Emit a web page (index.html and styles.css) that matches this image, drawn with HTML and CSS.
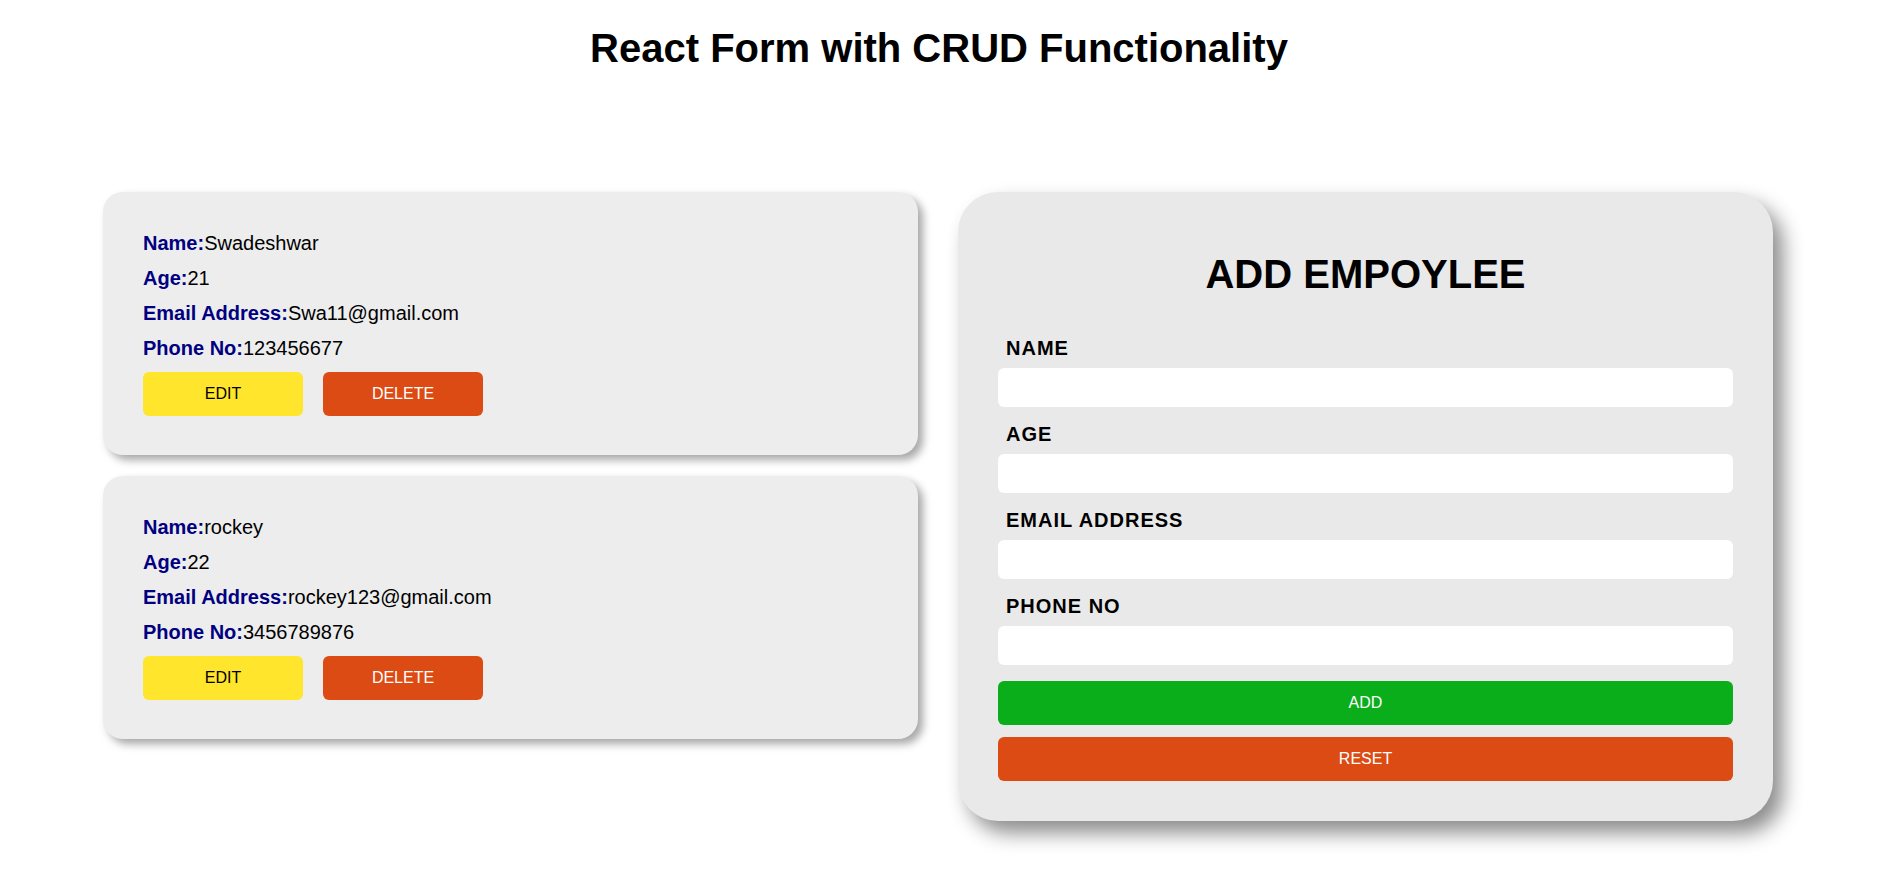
FILE: index.html
```html
<!DOCTYPE html>
<html lang="en">
<head>
<meta charset="utf-8">
<title>React Form with CRUD Functionality</title>
<link rel="stylesheet" href="styles.css">
</head>
<body>
<h1 class="page-title">React Form with CRUD Functionality</h1>
<main class="layout">
  <section class="list">
    <div class="emp-card">
      <p class="row"><span class="key">Name:</span>Swadeshwar</p>
      <p class="row"><span class="key">Age:</span>21</p>
      <p class="row"><span class="key">Email Address:</span>Swa11@gmail.com</p>
      <p class="row"><span class="key">Phone No:</span>123456677</p>
      <div class="actions">
        <button class="btn btn-edit">EDIT</button>
        <button class="btn btn-delete">DELETE</button>
      </div>
    </div>
    <div class="emp-card">
      <p class="row"><span class="key">Name:</span>rockey</p>
      <p class="row"><span class="key">Age:</span>22</p>
      <p class="row"><span class="key">Email Address:</span>rockey123@gmail.com</p>
      <p class="row"><span class="key">Phone No:</span>3456789876</p>
      <div class="actions">
        <button class="btn btn-edit">EDIT</button>
        <button class="btn btn-delete">DELETE</button>
      </div>
    </div>
  </section>
  <form class="form-card">
    <h2 class="form-title">ADD EMPOYLEE</h2>
    <label class="field-label">NAME</label>
    <input class="field-input" type="text">
    <label class="field-label">AGE</label>
    <input class="field-input" type="text">
    <label class="field-label">EMAIL ADDRESS</label>
    <input class="field-input" type="text">
    <label class="field-label">PHONE NO</label>
    <input class="field-input" type="text">
    <button type="button" class="wide-btn btn-add">ADD</button>
    <button type="button" class="wide-btn btn-reset">RESET</button>
  </form>
</main>
</body>
</html>
```

FILE: styles.css
```css
* { box-sizing: border-box; }

html, body {
  min-height: 100%;
}

body {
  margin: 0;
  padding-bottom: 60px;
  background: #ffffff;
  font-family: "Liberation Sans", Arial, sans-serif;
  color: #000;
}

.page-title {
  margin: 0;
  padding-top: 25px;
  padding-right: 4px;
  font-size: 40px;
  line-height: 46px;
  font-weight: bold;
  text-align: center;
}

.layout {
  display: flex;
  align-items: flex-start;
  gap: 40px;
  margin-top: 121px;
  padding-left: 103px;
}

.list {
  width: 815px;
  display: flex;
  flex-direction: column;
  gap: 21px;
}

.emp-card {
  background: #ededed;
  border-radius: 20px;
  padding: 34px 40px 39px;
  box-shadow: 5px 5px 9px rgba(0, 0, 0, 0.35);
}

.row {
  margin: 0;
  font-size: 20px;
  line-height: 35px;
  color: #000;
}

.key {
  color: #000080;
  font-weight: bold;
}

.actions {
  display: flex;
  gap: 20px;
  margin-top: 6px;
}

.btn {
  width: 160px;
  height: 44px;
  border: none;
  border-radius: 6px;
  font-family: "Liberation Sans", Arial, sans-serif;
  font-size: 16px;
  padding: 0;
}

.btn-edit { background: #ffe52b; color: #000; }
.btn-delete { background: #dd4b14; color: #fff; }

.form-card {
  width: 815px;
  background: #e9e9e9;
  border-radius: 40px;
  padding: 59px 40px 40px;
  box-shadow: 10px 12px 20px rgba(0, 0, 0, 0.45);
  display: flex;
  flex-direction: column;
}

.form-title {
  margin: 0 0 40px;
  font-size: 40px;
  line-height: 46px;
  font-weight: bold;
  text-align: center;
}

.field-label {
  display: block;
  padding-left: 8px;
  margin-bottom: 8px;
  font-size: 20px;
  line-height: 23px;
  font-weight: bold;
  letter-spacing: 1px;
}

.field-input {
  display: block;
  width: 100%;
  height: 39px;
  margin: 0 0 16px;
  border: none;
  border-radius: 6px;
  background: #fff;
}

.wide-btn {
  width: 100%;
  height: 44px;
  border: none;
  border-radius: 6px;
  color: #fff;
  font-family: "Liberation Sans", Arial, sans-serif;
  font-size: 16px;
}

.btn-add { background: #0aad1a; margin-bottom: 12px; }
.btn-reset { background: #dd4b14; }
```
